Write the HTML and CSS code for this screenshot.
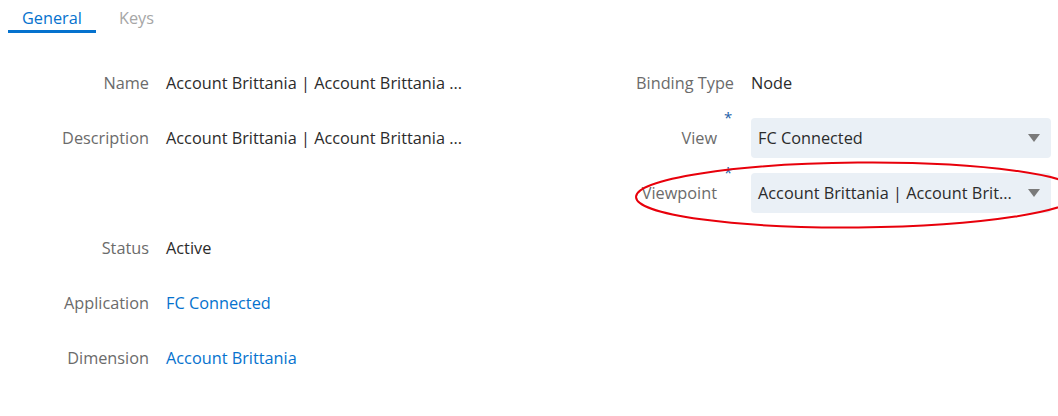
FILE: index.html
```html
<!DOCTYPE html>
<html>
<head>
<meta charset="utf-8">
<link rel="stylesheet" href="styles.css">
</head>
<body>
<div class="page">
  <div class="tabs">
    <div class="tab active">General</div>
    <div class="tab">Keys</div>
  </div>
  <div class="form">
    <div class="col left">
      <div class="row"><div class="label">Name</div><div class="value">Account Brittania | Account Brittania ...</div></div>
      <div class="row"><div class="label">Description</div><div class="value">Account Brittania | Account Brittania ...</div></div>
      <div class="row"></div>
      <div class="row"><div class="label">Status</div><div class="value">Active</div></div>
      <div class="row"><div class="label">Application</div><div class="value link">FC Connected</div></div>
      <div class="row"><div class="label">Dimension</div><div class="value link">Account Brittania</div></div>
    </div>
    <div class="col right">
      <div class="row"><div class="label">Binding Type</div><div class="value">Node</div></div>
      <div class="row"><div class="label req"><span class="text">View</span><span class="star">*</span></div>
        <div class="select"><span class="sel-text">FC Connected</span><span class="arrow"></span></div></div>
      <div class="row"><div class="label req"><span class="text">Viewpoint</span><span class="star">*</span></div>
        <div class="select"><span class="sel-text">Account Brittania | Account Brit...</span><span class="arrow"></span></div></div>
    </div>
  </div>
  <svg class="circle" width="470" height="80" viewBox="0 0 470 80">
    <ellipse cx="237" cy="37" rx="222" ry="32.5" fill="none" stroke="#e8000b" stroke-width="2" transform="rotate(-0.5 237 37)"/>
  </svg>
</div>
</body>
</html>
```
FILE: styles.css
```css
html, body {
  margin: 0;
  padding: 0;
  background: #ffffff;
}
body {
  font-family: "Open Sans", "Noto Sans", sans-serif;
  font-size: 16.3px;
  color: #2b2b2b;
}
.page {
  position: relative;
  width: 1058px;
  height: 416px;
  overflow: hidden;
}
.tabs {
  display: flex;
  padding-left: 8px;
  height: 33px;
}
.tab {
  padding: 7px 14px 0;
  height: 23px;
  color: #a6a6a6;
  font-size: 16.3px;
  line-height: 23px;
  margin-right: 9px;
}
.tab.active {
  color: #0572ce;
  border-bottom: 3px solid #0572ce;
}
.form {
  display: flex;
  padding-top: 22px;
}
.col.left {
  width: 592px;
  padding-left: 8px;
}
.col.right {
  flex: 1;
}
.row {
  display: flex;
  align-items: center;
  height: 55px;
}
.label {
  color: #6b6b6b;
  text-align: right;
  line-height: 22px;
  white-space: nowrap;
}
.left .label {
  width: 141px;
  margin-right: 17px;
}
.right .label {
  width: 134px;
  margin-right: 17px;
}
.label.req {
  display: flex;
  justify-content: flex-end;
  align-self: stretch;
  align-items: center;
}
.label.req .text {
  margin-right: 7px;
}
.star {
  align-self: flex-start;
  color: #1e5fa8;
  font-size: 15px;
  line-height: 15px;
  width: 10px;
  text-align: left;
}
.value {
  line-height: 22px;
  white-space: nowrap;
}
.value.link {
  color: #0572ce;
}
.select {
  display: flex;
  align-items: center;
  width: 300px;
  height: 40px;
  box-sizing: border-box;
  background: #eaf0f6;
  border-radius: 4px;
  padding: 0 11px 0 7px;
}
.sel-text {
  flex: 1;
  white-space: nowrap;
  color: #2b2b2b;
}
.arrow {
  width: 0;
  height: 0;
  border-left: 6px solid transparent;
  border-right: 6px solid transparent;
  border-top: 8px solid #7a7a7a;
}
.circle {
  position: absolute;
  left: 621px;
  top: 158px;
}
```
